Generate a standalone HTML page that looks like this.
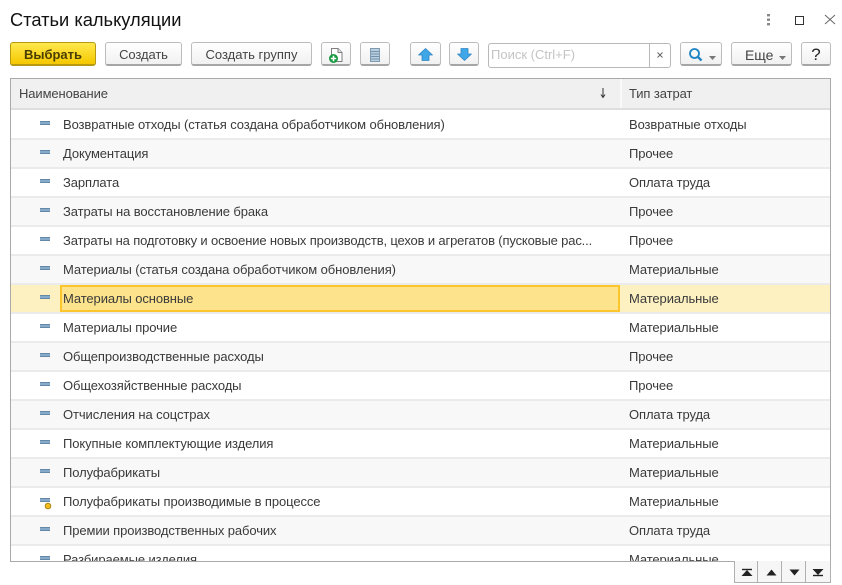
<!DOCTYPE html>
<html lang="ru"><head><meta charset="utf-8"><title>Статьи калькуляции</title>
<style>
html,body{margin:0;padding:0;background:#fff}
#p{position:relative;width:842px;height:585px;overflow:hidden;background:#fff;font:13px "Liberation Sans",Arial,sans-serif;color:#333}
#p div,#p svg{position:absolute}
.t{white-space:nowrap}
.b{top:42px;height:24px;box-sizing:border-box;border:1px solid #bcbcbc;border-bottom:2px solid #a6a6a6;border-radius:3px;background:linear-gradient(#fff,#f1f1f1);text-align:center;line-height:24px;color:#444;font-size:13px}
.row{left:0;width:819px;height:29px;box-sizing:border-box;background:#fff;border-bottom:2px solid #ebebeb}
.alt{background:#f8f8f8}
.n{left:52px;font-size:13px;letter-spacing:-.1px;white-space:nowrap;line-height:16px;top:6px;color:#3a3a3a}
.c{left:618px;font-size:13px;letter-spacing:-.1px;white-space:nowrap;line-height:16px;top:6px;color:#3a3a3a}
.i{left:29px;top:10px;width:10px;height:2px;background:#86aac9;border:1px solid #6688a7;border-width:1px 0}
.pg{top:561px;width:24px;height:22px;box-sizing:border-box;border:1px solid #b0b0b0;border-top:0;border-left:0;background:#f6f6f6}
</style></head><body><div id="p">
<div class="t" style="left:10px;top:9px;font-size:18.3px;line-height:22px;color:#111">Статьи калькуляции</div>

<svg style="left:766px;top:14px" width="5" height="12"><rect x="1" y="0" width="3" height="2.4" fill="#888"/><rect x="1" y="4.5" width="3" height="2.4" fill="#888"/><rect x="1" y="9" width="3" height="2.4" fill="#888"/></svg>
<div style="left:795px;top:16px;width:7px;height:7px;border:1px solid #333"></div>
<svg style="left:824px;top:14px" width="12" height="11"><path d="M1 1L11 10M11 1L1 10" stroke="#666" stroke-width="1" fill="none"/></svg>

<div class="b" style="left:10px;width:86px;background:linear-gradient(#ffe84d,#f5c800);border-color:#b59a12;color:#4a3d00;font-weight:bold;font-size:13px">Выбрать</div>
<div class="b" style="left:105px;width:77px;letter-spacing:-.1px">Создать</div>
<div class="b" style="left:191px;width:121px">Создать группу</div>
<div class="b" style="left:321px;width:30px"></div>
<svg style="left:327px;top:47px" width="18" height="17"><path d="M4.500 1.500H11L15 5.500V14.500H4.500Z" fill="#fff" stroke="#7d7d7d"/><path d="M11 1.500V5.500H15" fill="#e4e4e4" stroke="#7d7d7d"/><circle cx="6.500" cy="11.500" r="4.500" fill="#169a3e"/><path d="M3.800 11.500H9.200M6.500 8.800V14.200" stroke="#fff" stroke-width="1.600"/></svg>
<div class="b" style="left:360px;width:30px"></div>
<svg style="left:369px;top:47px" width="12" height="16"><rect x="1.500" y="1.500" width="9" height="13" fill="#b9cede" stroke="#7f9bb2"/><path d="M2 4.500H10M2 7H10M2 9.500H10M2 12H10" stroke="#7491a9" stroke-width="1"/></svg>
<div class="b" style="left:410px;width:31px"></div>
<svg style="left:417px;top:47px" width="17" height="15"><path d="M8.500 1.500L15.500 8H12V13.500H5V8H1.500Z" fill="#3fa6e8" stroke="#2f86c4" stroke-width=".8" stroke-linejoin="round"/></svg>
<div class="b" style="left:449px;width:30px"></div>
<svg style="left:456px;top:47px" width="17" height="15"><path d="M8.500 13.500L15.500 7H12V1.500H5V7H1.500Z" fill="#3fa6e8" stroke="#2f86c4" stroke-width=".8" stroke-linejoin="round"/></svg>

<div style="left:488px;top:43px;width:183px;height:25px;box-sizing:border-box;border:1px solid #b8b8b8;border-radius:3px;background:#fff"></div>
<div style="left:649px;top:44px;width:1px;height:23px;background:#b8b8b8"></div>
<div class="t" style="left:491px;top:47px;font-size:13px;line-height:16px;color:#c4c4c4">Поиск (Ctrl+F)</div>
<svg style="left:656px;top:51px" width="9" height="9"><path d="M1.500 1.500L6.500 6.500M6.500 1.500L1.500 6.500" stroke="#666" stroke-width="1"/></svg>

<div class="b" style="left:680px;width:42px"></div>
<svg style="left:688px;top:47px" width="16" height="16"><circle cx="6.500" cy="6.500" r="4.500" fill="none" stroke="#1f84c4" stroke-width="1.800"/><path d="M9.800 9.800L13.500 13.500" stroke="#1f84c4" stroke-width="2.400"/></svg>
<svg style="left:709px;top:56px" width="7" height="4"><path d="M0 0H7L3.500 4Z" fill="#777"/></svg>
<div class="b" style="left:731px;width:61px;text-align:left;padding-left:13px;font-size:14px;letter-spacing:-.05px">Еще</div>
<svg style="left:779px;top:56px" width="7" height="4"><path d="M0 0H7L3.500 4Z" fill="#777"/></svg>
<div class="b" style="left:801px;width:30px;font-size:17px;font-weight:normal;color:#222">?</div>

<div style="left:10px;top:78px;width:821px;height:484px;box-sizing:border-box;border:1px solid #a9a9a9;overflow:hidden;background:#fff">
<div style="left:0;top:0;width:820px;height:31px;background:#f0f0f0;border-bottom:2px solid #dedede;box-sizing:border-box"></div>
<div style="left:609px;top:0;width:2px;height:29px;background:#fafafa"></div>
<div class="t" style="left:8px;top:7px;font-size:13px;letter-spacing:-.1px;line-height:16px;color:#444">Наименование</div>
<div class="t" style="left:618px;top:7px;font-size:13px;letter-spacing:-.1px;line-height:16px;color:#444">Тип затрат</div>
<svg style="left:588px;top:8px" width="8" height="12"><path d="M4 1V10M2 7.500L4 10.500L6 7.500" stroke="#333" stroke-width="1" fill="none"/></svg>

<div class="row" style="top:32px"><div class="i"></div><div class="n">Возвратные отходы (статья создана обработчиком обновления)</div><div class="c">Возвратные отходы</div></div>
<div class="row alt" style="top:61px"><div class="i"></div><div class="n">Документация</div><div class="c">Прочее</div></div>
<div class="row" style="top:90px"><div class="i"></div><div class="n">Зарплата</div><div class="c">Оплата труда</div></div>
<div class="row alt" style="top:119px"><div class="i"></div><div class="n">Затраты на восстановление брака</div><div class="c">Прочее</div></div>
<div class="row" style="top:148px"><div class="i"></div><div class="n" style="letter-spacing:-.15px">Затраты на подготовку и освоение новых производств, цехов и агрегатов (пусковые рас...</div><div class="c">Прочее</div></div>
<div class="row alt" style="top:177px"><div class="i"></div><div class="n">Материалы (статья создана обработчиком обновления)</div><div class="c">Материальные</div></div>
<div class="row" style="top:206px;background:#fdf1c2">
<div style="left:49px;top:0;width:560px;height:27px;box-sizing:border-box;background:#fde38c;border:2px solid #fbc52b"></div><div class="i"></div><div class="n">Материалы основные</div><div class="c">Материальные</div></div>
<div class="row" style="top:235px"><div class="i"></div><div class="n">Материалы прочие</div><div class="c">Материальные</div></div>
<div class="row alt" style="top:264px"><div class="i"></div><div class="n">Общепроизводственные расходы</div><div class="c">Прочее</div></div>
<div class="row" style="top:293px"><div class="i"></div><div class="n">Общехозяйственные расходы</div><div class="c">Прочее</div></div>
<div class="row alt" style="top:322px"><div class="i"></div><div class="n">Отчисления на соцстрах</div><div class="c">Оплата труда</div></div>
<div class="row" style="top:351px"><div class="i"></div><div class="n">Покупные комплектующие изделия</div><div class="c">Материальные</div></div>
<div class="row alt" style="top:380px"><div class="i"></div><div class="n">Полуфабрикаты</div><div class="c">Материальные</div></div>
<div class="row" style="top:409px"><div class="i"></div><svg style="left:33px;top:14px" width="8" height="8"><circle cx="4" cy="4" r="2.800" fill="#f0bf1e" stroke="#a9861a"/></svg><div class="n">Полуфабрикаты производимые в процессе</div><div class="c">Материальные</div></div>
<div class="row alt" style="top:438px"><div class="i"></div><div class="n">Премии производственных рабочих</div><div class="c">Оплата труда</div></div>
<div class="row" style="top:467px;border:0"><div class="i"></div><div class="n">Разбираемые изделия</div><div class="c">Материальные</div></div>
</div>

<div class="pg" style="left:734px;border-left:1px solid #b0b0b0"></div>
<svg style="left:741px;top:568px" width="12" height="9"><path d="M1 1.500H11" stroke="#222" stroke-width="1.400"/><path d="M6 2L11.500 8H.5Z" fill="#222"/></svg>
<div class="pg" style="left:758px"></div>
<svg style="left:766px;top:569px" width="11" height="7"><path d="M5.500 .5L10.500 6.500H.5Z" fill="#222"/></svg>
<div class="pg" style="left:782px"></div>
<svg style="left:789px;top:569px" width="11" height="7"><path d="M5.500 6.500L10.500 .5H.5Z" fill="#222"/></svg>
<div class="pg" style="left:806px;width:25px"></div>
<svg style="left:812px;top:568px" width="12" height="9"><path d="M1 7.500H11" stroke="#222" stroke-width="1.400"/><path d="M6 7L11.500 1H.5Z" fill="#222"/></svg>
</div></body></html>
